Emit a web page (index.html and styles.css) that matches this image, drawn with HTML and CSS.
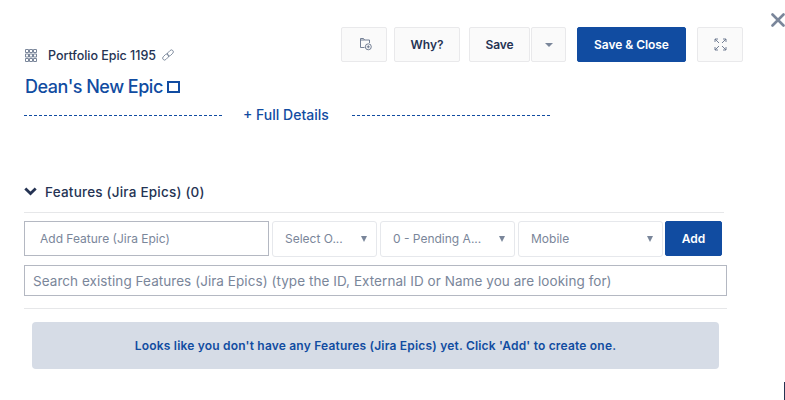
FILE: index.html
```
<!DOCTYPE html>
<html lang="en">
<head>
<meta charset="utf-8">
<title>Portfolio Epic 1195</title>
<link rel="stylesheet" href="styles.css">
</head>
<body>
<main class="panel">
  <header class="header">
    <div class="identity">
      <svg class="grid-icon" width="12" height="13" viewBox="0 0 12 13"><path d="M.5.5h3v3h-3zM4.500 .5h3v3h-3zM8.500.5h3v3h-3zM.5 5h3v3h-3zM4.500 5h3v3h-3zM8.500 5h3v3h-3zM.5 9.500h3v3h-3zM4.500 9.500h3v3h-3zM8.500 9.500h3v3h-3z"/></svg>
      <span class="epic-id">Portfolio Epic 1195</span>
      <svg class="link-icon" width="12" height="12" viewBox="0 0 12 12"><rect x="4.800" y="2.100" width="7" height="3.800" rx="1.900" transform="rotate(-45 8.300 4)"/><rect x=".2" y="6.100" width="7" height="3.800" rx="1.900" transform="rotate(-45 3.700 8)"/></svg>
    </div>
    <div class="toolbar">
      <button class="btn square folder"><svg width="14" height="14" viewBox="0 0 14 14"><path d="M6.500 10.500H2.500V1.500h3l1 1.500h5v3M2.500 3h4"/><circle cx="10.300" cy="9.800" r="3"/><path d="M8.800 9.800h3M10.300 8.300v3"/></svg></button>
      <button class="btn why">Why?</button>
      <button class="btn save">Save</button>
      <button class="btn more"><i class="caret"></i></button>
      <button class="btn primary save-close">Save &amp; Close</button>
      <button class="btn square"><svg width="13" height="13" viewBox="0 0 13 13"><path d="M1 4V1h3M1 1l4 4M9 1h3v3M12 1L8 5M1 9v3h3M1 12l4-4M9 12h3V9M12 12L8 8"/></svg></button>
    </div>
    <svg class="close" width="14" height="14" viewBox="0 0 14 14"><path d="M1.500 1.500l11 11M12.500 1.500l-11 11"/></svg>
  </header>
  <h1 class="title"><span>Dean's New Epic</span><i class="box"></i></h1>
  <div class="details"><i class="dash left"></i><span class="details-link">+ Full Details</span><i class="dash right"></i></div>
  <section class="features">
    <h2 class="section-title"><svg width="13" height="9" viewBox="0 0 13 9"><path d="M1.300 1.500l5.200 5 5.200-5"/></svg><span>Features (Jira Epics) (0)</span></h2>
    <div class="add-row">
      <div class="field name-field"><span>Add Feature (Jira Epic)</span></div>
      <div class="select owner"><span>Select O...</span><i class="arrow"></i></div>
      <div class="select state"><span>0 - Pending A...</span><i class="arrow"></i></div>
      <div class="select program"><span>Mobile</span><i class="arrow"></i></div>
      <button class="btn primary add">Add</button>
    </div>
    <div class="field search"><span>Search existing Features (Jira Epics) (type the ID, External ID or Name you are looking for)</span></div>
    <div class="notice-wrap"><div class="notice"><span>Looks like you don't have any Features (Jira Epics) yet. Click 'Add' to create one.</span></div></div>
  </section>
  <i class="edge"></i>
</main>
</body>
</html>
```
FILE: styles.css
```
* { box-sizing: border-box; }
body { margin: 0; background: #fff; font-family: Inter, "Liberation Sans", sans-serif; color: #253353; }
svg { fill: none; display: block; flex: none; }
span { white-space: nowrap; }
.panel { position: relative; width: 785px; height: 400px; overflow: hidden; padding-left: 24px; }
.header { display: flex; align-items: flex-start; height: 75px; }
.identity { display: flex; align-items: center; width: 317px; height: 16px; margin-top: 47px; padding-left: 1px; }
.grid-icon { stroke: #7a869a; stroke-width: 1; margin: 1px 11px 0 0; }
.epic-id { font-size: 12.500px; font-weight: 500; letter-spacing: -.03px; width: 108px; }
.link-icon { stroke: #7a869a; stroke-width: .9; margin-left: 6px; }
.toolbar { display: flex; margin-top: 27px; width: 402px; flex: none; }
.btn { display: flex; align-items: center; justify-content: center; height: 35px; padding: 0; flex: none; border: 1px solid #e9e9eb; border-radius: 2px; background: #fafafa; color: #253353; font: 600 12px Inter, sans-serif; letter-spacing: -.05px; white-space: nowrap; }
.square { width: 46px; }
.square svg { stroke: #65738a; stroke-width: .9; margin-bottom: 1px; }
.folder svg { margin-left: 2px; }
.why { width: 66px; margin-left: 7px; }
.save { width: 61px; margin-left: 9px; }
.more { width: 35px; margin-left: 1px; }
.caret { border: 4px solid transparent; border-top-color: #7a869a; border-bottom: 0; }
.primary { background: #114ca1; border-color: #114ca1; color: #fff; }
.save-close { width: 109px; margin: 0 11px; }
.close { margin: 13px 0 0 28px; stroke: #7a869a; stroke-width: 2.600; stroke-linecap: round; }
.title { display: flex; align-items: center; height: 22px; margin: 0; padding-left: 1px; color: #114ca1; font-size: 18px; font-weight: 500; letter-spacing: -.5px; }
.title span { width: 142px; }
.box { width: 13px; height: 12px; margin-top: 2px; border: 2px solid #114ca1; }
.details { display: flex; align-items: center; height: 35px; color: #114ca1; font-size: 14px; font-weight: 500; }
.dash { height: 1px; margin-top: 2px; background: repeating-linear-gradient(90deg, #114ca1 0 3px, transparent 3px 5px); }
.left { width: 198px; }
.right { width: 198px; }
.details-link { width: 86px; margin: 0 23px 0 21px; padding-bottom: 1px; }
.features { width: 703px; margin-top: 46px; }
.section-title { display: flex; align-items: center; height: 35px; width: 700px; margin: 0; padding-bottom: 7px; border-bottom: 1px solid #e6e7e9; font-size: 13.500px; font-weight: 500; letter-spacing: .21px; }
.section-title svg { stroke: #253353; stroke-width: 2.800; margin-right: 8px; }
.add-row { display: flex; align-items: flex-start; margin-top: 8px; height: 44px; font-size: 12px; color: #7a869a; }
.field { display: flex; align-items: center; border: 1px solid #b4b8c2; color: #7a869a; }
.name-field { width: 245px; height: 35px; padding-left: 15px; }
.select { display: flex; align-items: center; justify-content: space-between; height: 36px; border: 1px solid #e6e8ec; border-radius: 3px; padding: 0 9px 1px 12px; }
.owner { width: 105px; margin-left: 3px; }
.state { width: 135px; margin-left: 3px; }
.program { width: 145px; margin-left: 3px; }
.arrow { border: 3.500px solid transparent; border-top: 6px solid #7a869a; border-bottom: 0; }
.add { width: 57px; margin-left: 2px; }
.search { height: 31px; padding-left: 8px; font-size: 13.500px; letter-spacing: .057px; }
.notice-wrap { margin-top: 12px; padding: 13px 8px 0; border-top: 1px solid #e6e7e9; }
.notice { display: flex; align-items: center; justify-content: center; height: 47px; border-radius: 4px; background: #d6dce6; color: #114ca1; font-size: 12px; font-weight: 600; letter-spacing: .195px; }
.edge { position: absolute; right: 0; bottom: 0; width: 1px; height: 18px; background: #253353; }
```
